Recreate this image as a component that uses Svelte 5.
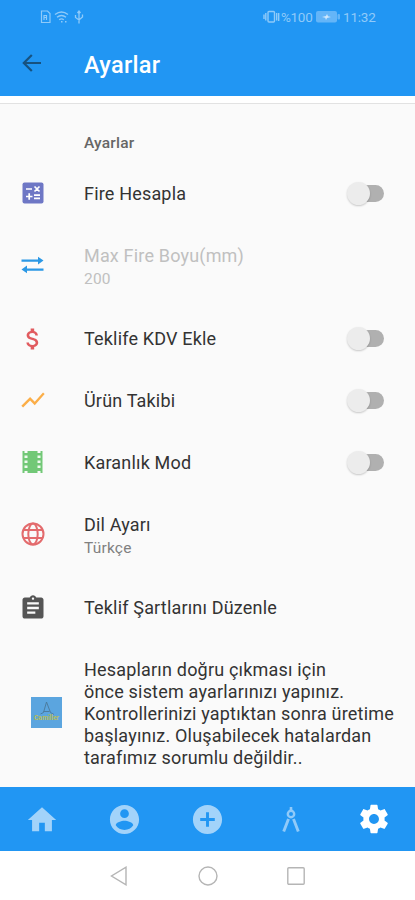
<script>
  const rows = [
    { icon: 'calc', title: 'Fire Hesapla', toggle: true, h: 62 },
    { icon: 'swap', title: 'Max Fire Boyu(mm)', sub: '200', disabled: true, h: 84 },
    { icon: 'dollar', title: 'Teklife KDV Ekle', toggle: true, h: 61 },
    { icon: 'chart', title: 'Ürün Takibi', toggle: true, h: 62 },
    { icon: 'film', title: 'Karanlık Mod', toggle: true, h: 62 },
    { icon: 'globe', title: 'Dil Ayarı', sub: 'Türkçe', h: 84 },
    { icon: 'clip', title: 'Teklif Şartlarını Düzenle', h: 61 }
  ];
  const message = ['Hesapların doğru çıkması için', 'önce sistem ayarlarınızı yapınız.', 'Kontrollerinizi yaptıktan sonra üretime', 'başlayınız. Oluşabilecek hatalardan', 'tarafımız sorumlu değildir..'];
  const paths = {
    dollar: 'M11.8 10.9c-2.27-.59-3-1.2-3-2.15 0-1.09 1.01-1.85 2.7-1.85 1.78 0 2.44.85 2.5 2.1h2.21c-.07-1.72-1.12-3.3-3.21-3.81V3h-3v2.16c-1.94.42-3.5 1.68-3.5 3.61 0 2.31 1.91 3.46 4.7 4.13 2.5.6 3 1.48 3 2.41 0 .69-.49 1.79-2.7 1.79-2.06 0-2.87-.92-2.98-2.1h-2.2c.12 2.19 1.76 3.42 3.68 3.83V21h3v-2.15c1.95-.37 3.5-1.5 3.5-3.55 0-2.84-2.43-3.81-4.7-4.4z',
    chart: 'M3.5 18.49l6-6.01 4 4L22 6.92l-1.41-1.41-7.09 7.97-4-4L2 16.99z',
    clip: 'M19 3h-4.18C14.4 1.84 13.3 1 12 1c-1.3 0-2.4.84-2.82 2H5c-1.1 0-2 .9-2 2v14c0 1.100.9 2 2 2h14c1.100 0 2-.9 2-2V5c0-1.100-.9-2-2-2zm-7 0c.55 0 1 .45 1 1s-.45 1-1 1-1-.45-1-1 .45-1 1-1zm2 14H7v-2h7v2zm3-4H7v-2h10v2zm0-4H7V7h10v2z',
    home: 'M10 20v-6h4v6h5v-8h3L12 3 2 12h3v8z',
    user: 'M12 2C6.480 2 2 6.480 2 12s4.480 10 10 10 10-4.480 10-10S17.520 2 12 2zm0 3c1.660 0 3 1.340 3 3s-1.340 3-3 3-3-1.340-3-3 1.340-3 3-3zm0 14.200c-2.500 0-4.710-1.280-6-3.220.03-1.990 4-3.080 6-3.080 1.990 0 5.970 1.090 6 3.080-1.290 1.940-3.500 3.220-6 3.220z',
    plus: 'M12 2C6.480 2 2 6.480 2 12s4.480 10 10 10 10-4.480 10-10S17.520 2 12 2zm5 11h-4v4h-2v-4H7v-2h4V7h2v4h4v2z',
    gear: 'M19.430 12.980c.04-.32.07-.64.07-.98s-.03-.66-.07-.98l2.110-1.650c.19-.15.24-.42.12-.64l-2-3.460c-.12-.22-.39-.3-.61-.22l-2.490 1c-.52-.4-1.080-.73-1.690-.98l-.38-2.650C14.460 2.180 14.250 2 14 2h-4c-.25 0-.46.18-.49.42l-.38 2.650c-.61.25-1.170.59-1.690.98l-2.490-1c-.23-.09-.49 0-.61.22l-2 3.460c-.13.22-.07.49.12.64l2.110 1.650c-.04.32-.07.65-.07.98s.03.66.07.98l-2.110 1.650c-.19.15-.24.42-.12.64l2 3.460c.12.22.39.3.61.22l2.490-1c.52.4 1.080.73 1.690.98l.38 2.650c.03.24.24.42.49.42h4c.25 0 .46-.18.49-.42l.38-2.650c.61-.25 1.170-.59 1.690-.98l2.490 1c.23.09.49 0 .61-.22l2-3.460c.12-.22.07-.49-.12-.64l-2.110-1.650zM12 15.500c-1.930 0-3.500-1.570-3.500-3.500s1.570-3.500 3.500-3.500 3.500 1.570 3.500 3.500-1.570 3.500-3.500 3.500z'
  };
  const colors = { dollar: '#e15b5f', chart: '#fbae48', clip: '#555' };
</script>

<div class="screen">
  <header>
    <div class="status">
      <svg class="left" width="46" height="16" viewBox="0 0 46 16" fill="none" stroke="#8fcaf9" stroke-width="1.200">
        <path d="M1.500 2h6l2.500 2.500V13.500H1.500z" /><path d="M4 11V6.500h2.500v2H4m2.500 0V11" />
        <path d="M15 5.500q6.500-5 13 0M17 8.200q4.500-3.500 9 0M19.200 10.800q2.300-1.800 4.600 0" stroke-width="1.400" /><path d="M21 12.800h1.500M25 12.800h1.500" stroke-width="1.500" />
        <path d="M39 2v12.500M35.500 6v2.500l3.500 2.500 3.500-3V5.500M37.500 4L39 2l1.500 2" stroke-width="1.300" />
      </svg>
      <svg class="vib" width="17" height="14" viewBox="0 0 17 14" fill="none" stroke="#8fcaf9" stroke-width="1.400">
        <rect x="5" y="1.500" width="6.500" height="10.500" rx="1" /><path d="M2.800 3v7.500M1 4.500v4.500M13.700 3v7.500M15.700 3v8" />
      </svg>
      <span class="pct">%100</span>
      <svg class="bat" width="24" height="12" viewBox="0 0 24 12">
        <rect width="21" height="11.500" rx="2" fill="#64b5f8" /><rect x="21.500" y="3" width="2.500" height="5.500" rx="1" fill="#64b5f8" />
        <path d="M6 6l4-1 1-2 1 2.300 3 .7-4 1-1 2-.8-2.300z" fill="#cfe8fc" />
      </svg>
      <span class="time">11:32</span>
    </div>
    <div class="bar">
      <svg width="20" height="18" viewBox="0 0 20 18" fill="none" stroke="#17527f" stroke-width="2.200"><path d="M19 9H2M9.800 1L1.800 9l8 8" /></svg>
      <h1>Ayarlar</h1>
    </div>
  </header>
  <div class="strip"></div>

  <main>
    <h2>Ayarlar</h2>
    {#each rows as r}
      <div class="row" class:disabled={r.disabled} class:double={r.sub} style:height="{r.h}px">
        <div class="icon">
          {#if r.icon === 'calc'}
            <svg width="22" height="22" viewBox="0 0 22 22"><rect x=".5" y=".5" width="21" height="21" rx="2" fill="#6e77c5" /><path d="M4 7h6M12.500 4.500l5 5M17.500 4.500l-5 5M4 14.500h6.500M7.200 11.300v6.500M12 13.200h6M12 16.400h6" stroke="#fff" stroke-width="1.700" /></svg>
          {:else if r.icon === 'swap'}
            <svg width="23" height="18" viewBox="0 0 23 18" fill="#2b98e5"><path d="M.5 3.500H17V.800L22.500 4.500 17 8.500V5.700H.500zM22.500 12.500H6V9.500L.500 13.500 6 17.300V14.700h16.500z" /></svg>
          {:else if r.icon === 'film'}
            <svg width="21" height="22" viewBox="0 0 21 22"><path d="M.5 0h2v2h3V0h10v2h3V0h2v22h-2v-2h-3v2h-10v-2h-3v2h-2z" fill="#72c877" /><path d="M2.500 4.500h3v2.500h-3zM2.500 9.500h3V12h-3zM2.500 14.500h3V17h-3zM15.500 4.500h3v2.500h-3zM15.500 9.500h3V12h-3zM15.500 14.500h3V17h-3z" fill="#effaf0" /></svg>
          {:else if r.icon === 'globe'}
            <svg width="24" height="24" viewBox="0 0 24 24" fill="none" stroke="#e36b6d" stroke-width="2"><circle cx="12" cy="12" r="10.500" /><ellipse cx="12" cy="12" rx="4.700" ry="10.500" /><path d="M2.500 8h19M2.500 16h19" /></svg>
          {:else}
            <svg width="28" height="28" viewBox="0 0 24 24" fill={colors[r.icon]}><path d={paths[r.icon]} /></svg>
          {/if}
        </div>
        <div class="copy"><span class="title">{r.title}</span>{#if r.sub}<span class="sub">{r.sub}</span>{/if}</div>
        {#if r.toggle}<div class="switch"><i></i></div>{/if}
      </div>
    {/each}
    <div class="row note">
      <div class="logo">
        <svg width="31" height="31" viewBox="0 0 31 31"><rect width="31" height="31" fill="#5ba5df" /><path d="M9.500 17l3-1.500L15.500 5l4 10.500L23 17.500M12.500 14.500h6" fill="none" stroke="#4b7898" stroke-width=".9" /><text x="15.500" y="23" text-anchor="middle" textLength="25" lengthAdjust="spacingAndGlyphs">Camiller</text></svg>
      </div>
      <p>{#each message as line}<span>{line}</span>{/each}</p>
    </div>
  </main>

  <nav>
    {#each ['home', 'user', 'plus'] as n}
      <div class={n}><svg width={n === 'home' ? 34 : 35} height={n === 'home' ? 34 : 35} viewBox="0 0 24 24" fill="#a2d3fa"><path d={paths[n]} /></svg></div>
    {/each}
    <div>
      <svg width="18" height="27" viewBox="0 0 18 27" fill="none" stroke="#90caf9"><circle cx="9" cy="8" r="3.200" stroke-width="2.400" /><path d="M9 1v4" stroke-width="2.600" /><path d="M6.500 13L1.700 25.500M11.500 13l4.800 12.500" stroke-width="2.900" /></svg>
    </div>
    <div><svg width="34" height="34" viewBox="0 0 24 24" fill="#fff"><path d={paths.gear} /></svg></div>
  </nav>
  <footer>
    <svg width="18" height="20" viewBox="0 0 18 20"><path d="M16 1.200v17.600L1.500 10z" /></svg>
    <svg width="20" height="20" viewBox="0 0 20 20"><circle cx="10" cy="10" r="9" /></svg>
    <svg width="18" height="18" viewBox="0 0 18 18"><rect x=".8" y=".8" width="16.400" height="16.400" rx="1" /></svg>
  </footer>
</div>

<style>
  :global(body) { margin: 0; }
  .screen { width: 415px; height: 900px; display: flex; flex-direction: column; overflow: hidden; background: #fafafa; font-family: Roboto, sans-serif; color: #333; }
  svg { display: block; flex: none; }
  header { height: 96px; flex: none; background: #2196f3; }
  .status { height: 33px; display: flex; align-items: center; box-sizing: border-box; color: #90caf9; font-size: 13.500px; }
  .left { margin-left: 40px; }
  .vib { margin-left: 177px; }
  .pct { margin-left: 1px; width: 34px; letter-spacing: -.3px; }
  .bat { margin-left: 1px; }
  .time { margin-left: 3px; letter-spacing: -.2px; }
  .bar { height: 63px; display: flex; align-items: center; padding-left: 22px; box-sizing: border-box; }
  .bar svg { margin-top: -3px; }
  h1 { margin: 0 0 0 42px; font-size: 23.500px; line-height: 26px; font-weight: 500; color: #fff; letter-spacing: .3px; }
  .strip { height: 8px; flex: none; box-sizing: border-box; background: #fff; border-bottom: 1px solid #e2e2e2; }
  main { height: 683px; flex: none; }
  h2 { margin: 0; height: 58px; box-sizing: border-box; padding: 29px 0 0 84px; font-size: 15.500px; line-height: 20px; font-weight: 500; letter-spacing: .2px; color: #666; }
  .row { display: flex; align-items: center; box-sizing: border-box; }
  .icon { width: 65px; display: flex; justify-content: center; flex: none; }
  .double .icon { padding-bottom: 2px; }
  .copy { display: flex; flex-direction: column; margin-left: 19px; flex: 1; white-space: nowrap; }
  .double .copy { padding-top: 2px; }
  .title { font-size: 18px; line-height: 23px; letter-spacing: .18px; }
  .sub { font-size: 15.500px; line-height: 24px; color: #808080; letter-spacing: .2px; }
  .disabled .title, .disabled .sub { color: #c0c0c0; }
  .switch { width: 38px; height: 26px; margin-right: 30px; display: flex; align-items: center; }
  .switch::after { content: ''; width: 26px; height: 17px; border-radius: 9px; background: #b0b0b0; margin-left: -12px; }
  .switch i { width: 23px; height: 23px; border-radius: 50%; background: #ececec; box-shadow: 0 1px 2px #0003; z-index: 1; flex: none; }
  .note { height: 149px; }
  .note p { padding-top: 2px; }
  .logo { width: 84px; padding-left: 31px; box-sizing: border-box; flex: none; }
  .logo text { font: bold 6.500px Roboto, sans-serif; fill: #b9bd55; }
  p { margin: 0; font-size: 18px; line-height: 22px; letter-spacing: .19px; white-space: nowrap; }
  p span { display: block; }
  nav { height: 64px; flex: none; background: #2196f3; display: flex; }
  nav div { width: 83px; display: flex; align-items: center; justify-content: center; }
  .home { padding-top: 2px; box-sizing: border-box; }
  footer { height: 49px; flex: none; background: #fff; display: flex; align-items: center; padding-left: 110px; gap: 69.500px; box-sizing: border-box; }
  footer svg { fill: none; stroke: #b5b5b5; stroke-width: 1.400; }
</style>
